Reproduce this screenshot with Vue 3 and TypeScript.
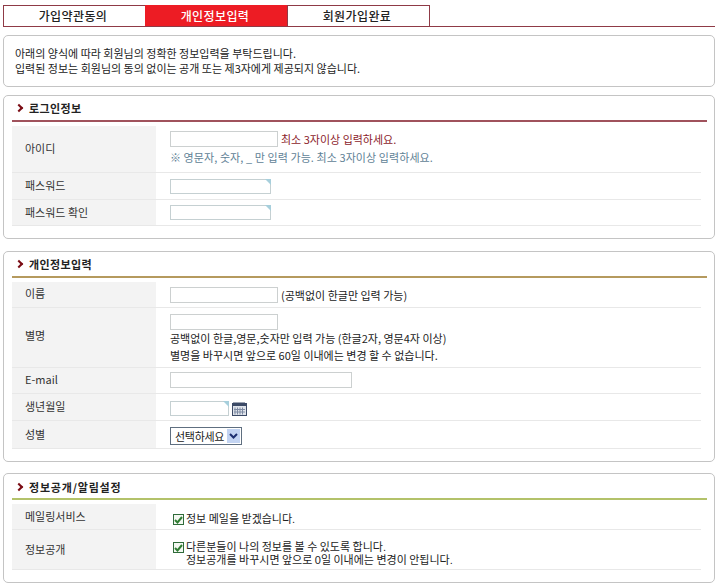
<template>
  <div class="page">
    <div class="steps">
      <div v-for="(step, index) in steps" :key="step" class="step" :class="{ active: index === 1 }">{{ step }}</div>
    </div>

    <div class="box notice">
      <p>아래의 양식에 따라 회원님의 정확한 정보입력을 부탁드립니다.</p>
      <p>입력된 정보는 회원님의 동의 없이는 공개 또는 제3자에게 제공되지 않습니다.</p>
    </div>

    <section class="box section login">
      <h2 class="title line-red"><span class="arrow"></span>로그인정보</h2>
      <div class="row row-id">
        <div class="label">아이디</div>
        <div class="field">
          <div class="inline">
            <input class="input w108" type="text" />
            <span class="warn">최소 3자이상 입력하세요.</span>
          </div>
          <div class="hint">※ 영문자, 숫자, _ 만 입력 가능. 최소 3자이상 입력하세요.</div>
        </div>
      </div>
      <div class="row row-pw">
        <div class="label">패스워드</div>
        <div class="field"><span class="keyed w100"></span></div>
      </div>
      <div class="row row-pw2">
        <div class="label">패스워드 확인</div>
        <div class="field"><span class="keyed w100"></span></div>
      </div>
    </section>

    <section class="box section personal">
      <h2 class="title line-gold"><span class="arrow"></span>개인정보입력</h2>
      <div class="row row-name">
        <div class="label top">이름</div>
        <div class="field">
          <div class="inline">
            <input class="input w108" type="text" />
            <span>(공백없이 한글만 입력 가능)</span>
          </div>
        </div>
      </div>
      <div class="row row-nick">
        <div class="label">별명</div>
        <div class="field">
          <input class="input w108" type="text" />
          <div class="text">공백없이 한글,영문,숫자만 입력 가능 (한글2자, 영문4자 이상)</div>
          <div class="text">별명을 바꾸시면 앞으로 60일 이내에는 변경 할 수 없습니다.</div>
        </div>
      </div>
      <div class="row row-mail">
        <div class="label latin">E-mail</div>
        <div class="field"><input class="input w182" type="text" /></div>
      </div>
      <div class="row row-birth">
        <div class="label top">생년월일</div>
        <div class="field">
          <div class="inline">
            <span class="keyed w59"></span>
            <svg class="calendar" width="15" height="14" viewBox="0 0 15 14">
              <rect x="0.5" y="1.500" width="14" height="12" fill="#dfe3ea" stroke="#3c4a66" />
              <rect x="1" y="1" width="13" height="3" fill="#3c4a66" />
              <path d="M2 0v2M4 0v2M6 0v2M8 0v2M10 0v2M12 0v2" stroke="#3c4a66" />
              <path d="M3 5.500v7M5.500 5.500v7M8 5.500v7M10.500 5.500v7M2 7.500h11M2 10h11" stroke="#7f8ba3" />
            </svg>
          </div>
        </div>
      </div>
      <div class="row row-gender">
        <div class="label top">성별</div>
        <div class="field">
          <div class="select">
            <span>선택하세요</span>
            <span class="select-btn">
              <svg width="9" height="6" viewBox="0 0 9 6"><path d="M1 1l3.500 3.500L8 1" fill="none" stroke="#1d2f6f" stroke-width="2" /></svg>
            </span>
          </div>
        </div>
      </div>
    </section>

    <section class="box section settings">
      <h2 class="title line-green wide"><span class="arrow"></span>정보공개/알림설정</h2>
      <div class="row row-mailing">
        <div class="label top">메일링서비스</div>
        <div class="field">
          <div class="check-line">
            <span class="check"><svg width="9" height="8" viewBox="0 0 9 8"><path d="M1 4l2.500 2.500L8 1" fill="none" stroke="#2f7d32" stroke-width="2" /></svg></span>
            <span>정보 메일을 받겠습니다.</span>
          </div>
        </div>
      </div>
      <div class="row row-open">
        <div class="label">정보공개</div>
        <div class="field">
          <div class="check-line">
            <span class="check"><svg width="9" height="8" viewBox="0 0 9 8"><path d="M1 4l2.500 2.500L8 1" fill="none" stroke="#2f7d32" stroke-width="2" /></svg></span>
            <div>
              <div>다른분들이 나의 정보를 볼 수 있도록 합니다.</div>
              <div>정보공개를 바꾸시면 앞으로 0일 이내에는 변경이 안됩니다.</div>
            </div>
          </div>
        </div>
      </div>
    </section>
  </div>
</template>

<script setup lang="ts">
const steps: string[] = ['가입약관동의', '개인정보입력', '회원가입완료'];
</script>

<style>
html, body {
  margin: 0;
  background: #fff;
}
</style>

<style scoped>
.page {
  width: 720px;
  height: 588px;
  overflow: hidden;
  box-sizing: border-box;
  padding: 5px 5px 0 3px;
  font-family: "Noto Sans CJK KR", "Noto Sans", sans-serif;
  font-size: 11px;
  color: #222;
}

.steps {
  display: flex;
  height: 22px;
  border-bottom: 1px solid #8f3a46;
  box-sizing: border-box;
}

.step {
  width: 142px;
  box-sizing: border-box;
  height: 21px;
  padding-right: 3px;
  line-height: 19px;
  text-align: center;
  font-size: 12px;
  font-weight: 500;
  letter-spacing: 0.4px;
  color: #222;
  border-top: 1px solid #8f3a46;
  border-left: 1px solid #8f3a46;
}

.step:nth-child(3) {
  width: 143px;
  border-right: 1px solid #8f3a46;
}

.step.active {
  background: #ed1c24;
  border-color: #ed1c24;
  color: #fff;
}

.box {
  box-sizing: border-box;
  border: 1px solid #c4c4c4;
  border-radius: 5px;
  background: #fff;
}

.notice {
  height: 52px;
  margin-top: 8px;
  padding: 10px 11px;
}

.notice p {
  margin: 0;
  line-height: 15px;
}

.section {
  padding: 0 13px 0 8px;
}

.login { height: 144px; margin-top: 8px; }
.personal { height: 211px; margin-top: 12px; }
.settings { height: 110px; margin-top: 11px; }

.title {
  display: flex;
  align-items: center;
  gap: 7px;
  box-sizing: border-box;
  height: 26px;
  margin: 0 -6px 4px 0;
  padding: 0 0 0 5px;
  font-size: 11px;
  font-weight: 700;
  letter-spacing: 0.4px;
  color: #222;
}

.title.wide { letter-spacing: 0.8px; padding-top: 2px; }

.arrow {
  width: 4px;
  height: 4px;
  margin-left: -1px;
  border-top: 2px solid #7a0c14;
  border-right: 2px solid #7a0c14;
  transform: rotate(45deg);
}

.line-red { border-bottom: 2px solid #a0525c; }
.line-gold { border-bottom: 2px solid #b59a5e; }
.line-green { border-bottom: 2px solid #b3c26a; }

.row {
  display: flex;
  border-bottom: 1px solid #e8e8e8;
  box-sizing: border-box;
}

.label {
  width: 144px;
  flex: none;
  box-sizing: border-box;
  display: flex;
  align-items: center;
  padding-left: 13px;
  padding-bottom: 2px;
  background: #f3f3f3;
  color: #333;
}

.label.top {
  align-items: flex-start;
  padding-top: 3px;
  padding-bottom: 0;
}

.field {
  flex: 1;
  padding-left: 14px;
  display: flex;
  flex-direction: column;
  justify-content: center;
}

.row-id { height: 47px; }
.row-id .field { justify-content: flex-start; padding-top: 5px; }
.row-pw { height: 27px; }
.row-pw .field { padding-top: 1px; }
.row-pw2 { height: 26px; }
.row-name { height: 26px; }
.row-nick { height: 60px; }
.row-nick .label { padding-bottom: 5px; }
.row-nick .field { justify-content: flex-start; padding-top: 6px; }
.row-mail { height: 26px; }
.row-mail .label { padding-bottom: 3px; }
.row-mail .field { padding-bottom: 1px; }
.row-birth { height: 27px; }
.row-birth .label { padding-top: 4px; }
.row-birth .field { padding-top: 3px; }
.row-gender { height: 28px; }
.row-gender .label { padding-top: 5px; }
.row-gender .field { padding-top: 2px; }
.row-mailing { height: 26px; }
.row-mailing .label { padding-top: 4px; }
.row-mailing .field { padding-top: 6px; }
.row-open { height: 40px; }
.row-open .field { padding-top: 9px; }

.inline {
  display: flex;
  align-items: center;
  gap: 3px;
}

.input, .keyed {
  display: block;
  box-sizing: border-box;
  height: 16px;
  margin: 0;
  padding: 0;
  border: 1px solid #ccd0d0;
  background: #fff;
  border-radius: 0;
  outline: none;
}

.keyed {
  position: relative;
  height: 15px;
  border-color: #c5d0d2;
}

.keyed::after {
  content: "";
  position: absolute;
  top: -1px;
  right: -1px;
  border-top: 6px solid #a7cfdc;
  border-left: 6px solid transparent;
}

.w108 { width: 108px; }
.w100 { width: 101px; }
.w182 { width: 182px; }
.w59 { width: 59px; }

.warn { color: #8c1c2c; }
.hint { color: #5f8296; margin-top: 3px; line-height: 14px; letter-spacing: 0.08px; }

.text {
  line-height: 17px;
}

.calendar { flex: none; }

.select {
  display: flex;
  align-items: center;
  justify-content: space-between;
  box-sizing: border-box;
  width: 72px;
  height: 18px;
  padding: 0 1px 0 4px;
  border: 1px solid #5f6f80;
  letter-spacing: -0.3px;
  line-height: 16px;
}

.select-btn {
  display: flex;
  align-items: center;
  justify-content: center;
  width: 13px;
  height: 14px;
  background: #c3d4f2;
}

.check-line {
  display: flex;
  align-items: flex-start;
  gap: 2px;
  padding-left: 3px;
  font-family: "Liberation Sans", "Noto Sans CJK KR", sans-serif;
  word-spacing: -0.6px;
  line-height: 13px;
}

.check {
  flex: none;
  display: flex;
  align-items: center;
  justify-content: center;
  box-sizing: border-box;
  width: 11px;
  height: 11px;
  margin-top: 1px;
  border: 1px solid #2f6b3a;
  background: #f4f8f2;
}
</style>
